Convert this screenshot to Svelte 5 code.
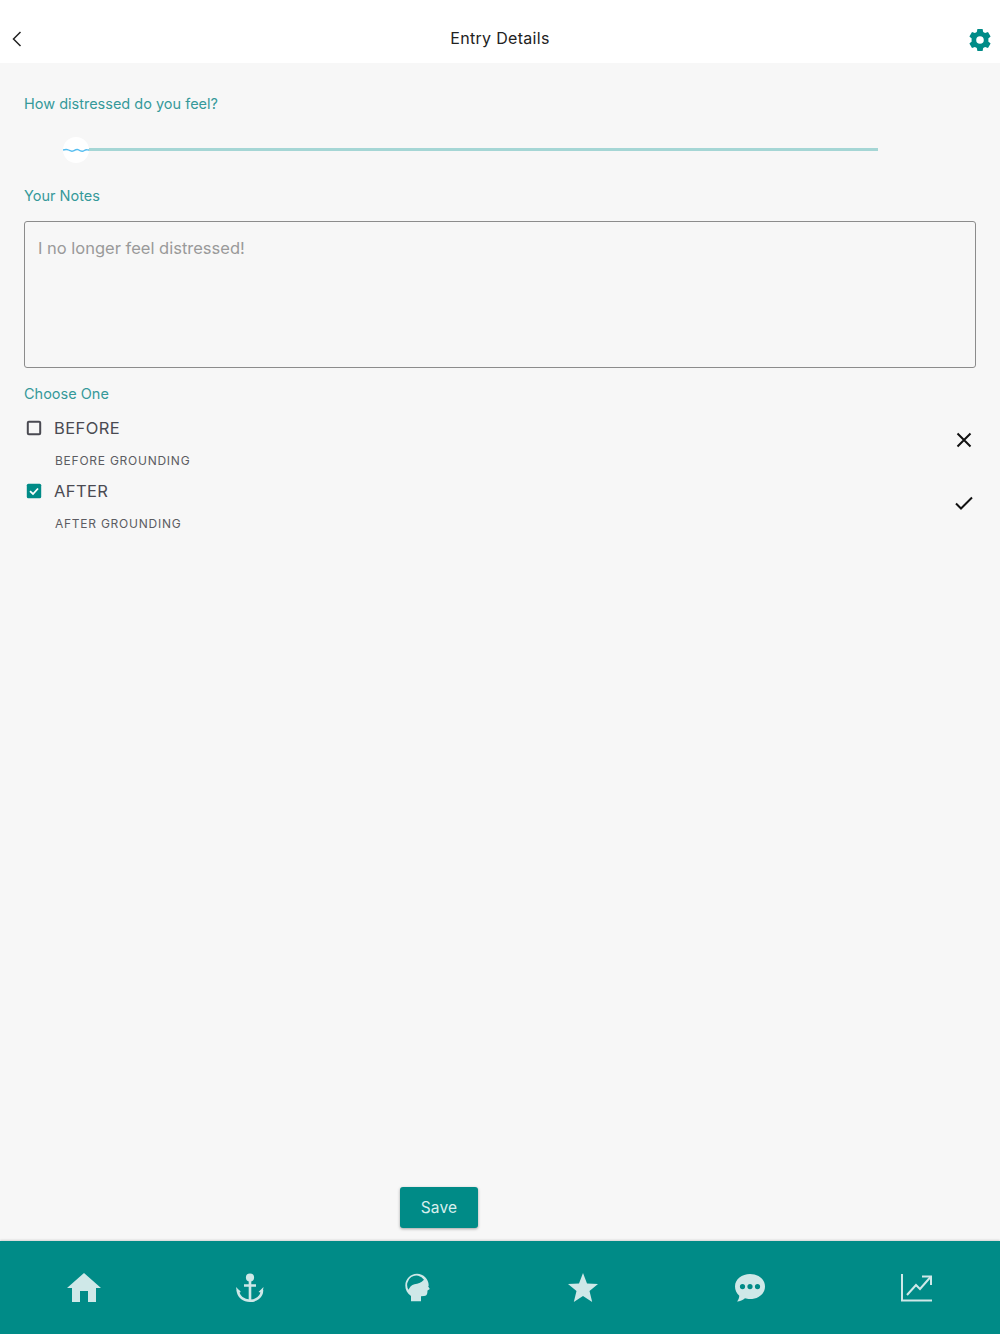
<script>
  let options = [
    { title: 'BEFORE', sub: 'BEFORE GROUNDING', checked: false },
    { title: 'AFTER', sub: 'AFTER GROUNDING', checked: true }
  ];
</script>

<div class="page">
  <header class="header">
    <button class="back" aria-label="Back">
      <svg width="12" height="16" viewBox="0 0 12 16"><path d="M9.5 1 L2.5 8 L9.5 15" fill="none" stroke="#222" stroke-width="1.5" /></svg>
    </button>
    <h1>Entry Details</h1>
    <button class="gear" aria-label="Settings">
      <svg width="24" height="24" viewBox="0 0 24 24"><path fill="#008b87" fill-rule="evenodd" d="M9.4 1h5.2l.6 3 1.9 1.1 2.9-1 2.6 4.5-2.3 2a7 7 0 0 1 0 2.8l2.3 2-2.6 4.5-2.9-1-1.9 1.1-.6 3H9.400l-.6-3-1.900-1.100-2.900 1-2.600-4.500 2.300-2a7 7 0 0 1 0-2.800l-2.300-2 2.600-4.500 2.900 1L8.800 4zM12 8.200a3.800 3.800 0 1 0 0 7.600 3.800 3.800 0 0 0 0-7.600z" /></svg>
    </button>
  </header>

  <main class="content">
    <div class="label first">How distressed do you feel?</div>

    <div class="slider">
      <div class="thumb">
        <svg width="28" height="6" viewBox="0 0 28 6"><path d="M0 3 C3 2 4 2 6 3 S9 5 11 4 S15 1.500 17 3 S21 5 23 3.500 S26 3 28 3" fill="none" stroke="#55bdf0" stroke-width="1.500" /></svg>
      </div>
      <div class="track"></div>
    </div>

    <div class="label notes">Your Notes</div>
    <div class="notes-box">I no longer feel distressed!</div>

    <div class="label choose">Choose One</div>
    {#each options as opt}
      <div class="option">
        <div class="option-text">
          <div class="option-head">
            {#if opt.checked}
              <svg class="box" width="16" height="16" viewBox="0 0 16 16"><rect x="0.800" y="0.800" width="14.400" height="14.400" rx="1.500" fill="#008b87" /><path d="M4 8.200 L7 11 L12 5.500" fill="none" stroke="#fff" stroke-width="1.800" /></svg>
            {:else}
              <svg class="box" width="16" height="16" viewBox="0 0 16 16"><rect x="1.800" y="1.800" width="12.400" height="12.400" rx="1" fill="none" stroke="#4a4a52" stroke-width="2" /></svg>
            {/if}
            <span class="title">{opt.title}</span>
          </div>
          <div class="sub">{opt.sub}</div>
        </div>
        {#if opt.checked}
          <svg class="mark" width="20" height="16" viewBox="0 0 20 16"><path d="M2 8.500 L7 13.500 L18 2.500" fill="none" stroke="#111" stroke-width="2" /></svg>
        {:else}
          <svg class="mark" width="20" height="16" viewBox="0 0 20 16"><path d="M3.500 1.500 L16.500 14.500 M16.500 1.500 L3.500 14.500" fill="none" stroke="#111" stroke-width="2" /></svg>
        {/if}
      </div>
    {/each}

    <div class="save-row">
      <button class="save">Save</button>
    </div>
  </main>

  <nav class="tabs">
    <div class="tab">
      <svg width="36" height="30" viewBox="-2 0 36 30"><path fill="#cfe8e8" d="M17 0 L34 15 H29 V29 H21 V18 H13 V29 H5 V15 H0 Z" /></svg>
    </div>
    <div class="tab">
      <svg width="28" height="30" viewBox="0 0 28 30"><g fill="none" stroke="#cfe8e8" stroke-width="2.600"><circle cx="14" cy="4.500" r="2.800" fill="#cfe8e8" /><path d="M14 7 V27.500 M8 12.500 H20" /><path d="M2 17 C2 24 8 27.800 14 27.800 C20 27.800 26 24 26 17" /></g><path fill="#cfe8e8" d="M0 14 L5 19 L1 20 Z M27.500 14 L22.500 19 L26.500 20 Z" /></svg>
    </div>
    <div class="tab">
      <svg width="26" height="30" viewBox="0 0 26 30"><path fill="#cfe8e8" fill-rule="evenodd" d="M13 0.800 C19.500 0.800 24.700 6 24.700 12.500 L24.200 13.600 L25.800 16 L23.500 17.500 L23.300 20 C23 22 22 23 20 23 L17 23.200 V28.200 H7 V23 C3 20 1.300 16.500 1.300 12.500 C1.300 6 6.500 0.800 13 0.800 Z M4.600 16.800 A9 9 0 0 1 20 6.800 C17 10 14 11 10.500 11.200 C7.500 11.800 5.500 14 4.600 16.800 Z" /></svg>
    </div>
    <div class="tab">
      <svg width="32" height="30" viewBox="0 0 32 30"><path fill="#cfe8e8" d="M16 0 L20 10.500 L31 11 L22.500 18 L25.200 29 L16 23 L6.800 29 L9.500 18 L1 11 L12 10.500 Z" /></svg>
    </div>
    <div class="tab">
      <svg width="30" height="28" viewBox="0 0 30 28"><path fill="#cfe8e8" fill-rule="evenodd" d="M15 0 C23 0 30 5 30 12.500 C30 20 23 25 15 25 C13 25 11.500 24.800 10 24.300 C8 26 5 27.500 2 27.500 C3.500 26 4.200 24 4.300 21.800 C1.500 19.500 0 16 0 12.500 C0 5 7 0 15 0 Z M7.500 10 a2.600 2.600 0 1 0 0 5.200 a2.600 2.600 0 0 0 0-5.200 Z M15 10 a2.600 2.600 0 1 0 0 5.200 a2.600 2.600 0 0 0 0-5.200 Z M22.500 10 a2.600 2.600 0 1 0 0 5.200 a2.600 2.600 0 0 0 0-5.200 Z" /></svg>
    </div>
    <div class="tab">
      <svg width="32" height="30" viewBox="0 0 32 30"><g fill="none" stroke="#cfe8e8" stroke-width="2"><path d="M1 1 V27.500 H31" /><path d="M6 22 L15 12 L19 16 L29.500 4" /><path d="M21 3.500 H30 V12" /></g></svg>
    </div>
  </nav>
</div>

<style>
  :global(body) {
    margin: 0;
    background: #f7f7f7;
  }

  .page {
    height: 1334px;
    display: flex;
    flex-direction: column;
    font-family: "Inter", "Liberation Sans", sans-serif;
    overflow: hidden;
  }

  .header {
    height: 63px;
    flex: none;
    background: #fff;
    display: flex;
    align-items: center;
    justify-content: space-between;
    padding: 15px 8px 0 11px;
    box-sizing: border-box;
    position: relative;
  }

  .header h1 {
    position: absolute;
    left: 0;
    right: 0;
    top: 28px;
    margin: 0;
    text-align: center;
    font-size: 16px;
    line-height: 20px;
    font-weight: 400;
    letter-spacing: 0.3px;
    color: #222;
  }

  button {
    font-family: inherit;
    border: none;
    background: none;
    padding: 0;
  }

  .back,
  .gear {
    display: flex;
  }

  .gear {
    margin-top: 2px;
  }

  .content {
    flex: 1;
    display: flex;
    flex-direction: column;
    padding: 0 24px;
    min-height: 0;
  }

  .label {
    font-size: 14.500px;
    line-height: 20px;
    color: #35999a;
  }

  .first {
    margin-top: 31px;
  }

  .slider {
    display: flex;
    align-items: center;
    margin: 23px 98px 0 39px;
    height: 26px;
  }

  .thumb {
    width: 26px;
    height: 26px;
    border-radius: 50%;
    background: #fff;
    flex: none;
    display: flex;
    align-items: center;
    justify-content: center;
  }

  .track {
    flex: 1;
    height: 3px;
    margin-top: -1px;
    background: #a5d6d5;
  }

  .notes {
    margin-top: 23px;
  }

  .notes-box {
    margin-top: 15px;
    height: 147px;
    box-sizing: border-box;
    border: 1px solid #8c8c8c;
    border-radius: 3px;
    padding: 15px 13px;
    font-size: 16.500px;
    line-height: 22px;
    color: #9a9a9a;
  }

  .choose {
    margin-top: 16px;
  }

  .option {
    display: flex;
    justify-content: space-between;
    align-items: flex-start;
    height: 62.500px;
    box-sizing: border-box;
    padding: 10px 2px 0 0;
  }

  .option-head {
    display: flex;
    align-items: center;
    gap: 12.500px;
    height: 28px;
    padding-left: 1.500px;
  }

  .box {
    flex: none;
  }

  .title {
    font-size: 16.500px;
    letter-spacing: 0.4px;
    color: #4a4a52;
  }

  .sub {
    margin-top: 11px;
    margin-left: 31px;
    font-size: 12px;
    line-height: 16px;
    letter-spacing: 0.75px;
    color: #5c5c62;
  }

  .mark {
    margin-top: 18px;
  }

  .save-row {
    margin-top: auto;
    margin-bottom: 13px;
    padding-left: 376px;
  }

  .save {
    width: 78px;
    height: 41px;
    background: #008b87;
    color: #d8efee;
    border-radius: 3px;
    font-size: 15.500px;
    letter-spacing: 0.2px;
    box-shadow: 0 1px 3px rgba(0, 0, 0, 0.35);
  }

  .tabs {
    height: 93px;
    flex: none;
    background: #008b87;
    display: grid;
    grid-template-columns: repeat(6, 1fr);
    box-shadow: 0 -1px 2px rgba(0, 0, 0, 0.15);
  }

  .tab {
    display: flex;
    align-items: center;
    justify-content: center;
  }
</style>
